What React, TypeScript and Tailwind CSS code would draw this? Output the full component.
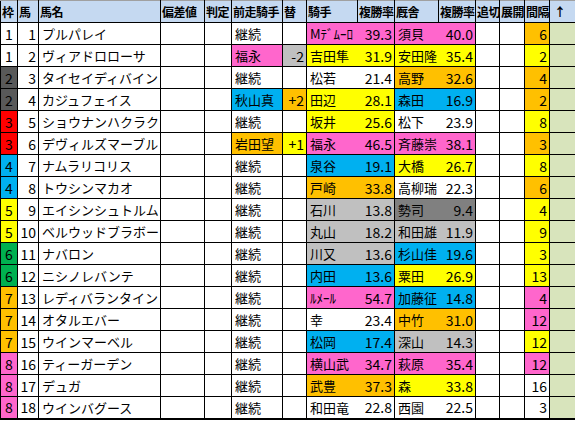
import React from "react";

const BG: Record<string, string> = {
  pink: "bg-[#ff66cc]",
  yellow: "bg-[#ffff00]",
  orange: "bg-[#ffc000]",
  blue: "bg-[#00b0f0]",
  gray: "bg-[#c0c0c0]",
  dark: "bg-[#808080]",
  white: "bg-white",
};

const FRAME: Record<number, string> = {
  1: "bg-white",
  2: "bg-[#595959]",
  3: "bg-[#ff0000]",
  4: "bg-[#00b0f0]",
  5: "bg-[#ffff00]",
  6: "bg-[#00b050]",
  7: "bg-[#ffc000]",
  8: "bg-[#ff66cc]",
};

type Row = [number, number, string, string, string, string, string, string, string, string, string, string, string, string, string];

// 枠, 馬, 馬名, 前走騎手, 色, 替, 色, 騎手, 色, 率, 厩舎, 色, 率, 間隔, 色
const rows: Row[] = [
  [1, 1, "プルパレイ", "継続", "white", "", "white", "Mﾃﾞﾑｰﾛ", "pink", "39.3", "須貝", "pink", "40.0", "6", "orange"],
  [1, 2, "ヴィアドロローサ", "福永", "pink", "-2", "gray", "吉田隼", "yellow", "31.9", "安田隆", "yellow", "35.4", "2", "yellow"],
  [2, 3, "タイセイディバイン", "継続", "white", "", "white", "松若", "white", "21.4", "高野", "orange", "32.6", "4", "orange"],
  [2, 4, "カジュフェイス", "秋山真", "blue", "+2", "orange", "田辺", "yellow", "28.1", "森田", "blue", "16.9", "2", "orange"],
  [3, 5, "ショウナンハクラク", "継続", "white", "", "white", "坂井", "yellow", "25.6", "松下", "white", "23.9", "8", "yellow"],
  [3, 6, "デヴィルズマーブル", "岩田望", "orange", "+1", "yellow", "福永", "pink", "46.5", "斉藤崇", "pink", "38.1", "3", "orange"],
  [4, 7, "ナムラリコリス", "継続", "white", "", "white", "泉谷", "blue", "19.1", "大橋", "yellow", "26.7", "8", "yellow"],
  [4, 8, "トウシンマカオ", "継続", "white", "", "white", "戸崎", "orange", "33.8", "高柳瑞", "white", "22.3", "6", "orange"],
  [5, 9, "エイシンシュトルム", "継続", "white", "", "white", "石川", "gray", "13.8", "勢司", "dark", "9.4", "4", "yellow"],
  [5, 10, "ベルウッドブラボー", "継続", "white", "", "white", "丸山", "gray", "18.2", "和田雄", "gray", "11.9", "9", "yellow"],
  [6, 11, "ナバロン", "継続", "white", "", "white", "川又", "gray", "13.6", "杉山佳", "blue", "19.6", "3", "yellow"],
  [6, 12, "ニシノレバンテ", "継続", "white", "", "white", "内田", "blue", "13.6", "粟田", "yellow", "26.9", "13", "yellow"],
  [7, 13, "レディバランタイン", "継続", "white", "", "white", "ﾙﾒｰﾙ", "pink", "54.7", "加藤征", "blue", "14.8", "4", "pink"],
  [7, 14, "オタルエバー", "継続", "white", "", "white", "幸", "white", "23.4", "中竹", "orange", "31.0", "12", "pink"],
  [7, 15, "ウインマーベル", "継続", "white", "", "white", "松岡", "blue", "17.4", "深山", "gray", "14.3", "12", "yellow"],
  [8, 16, "ティーガーデン", "継続", "white", "", "white", "横山武", "pink", "34.7", "萩原", "pink", "35.4", "12", "pink"],
  [8, 17, "デュガ", "継続", "white", "", "white", "武豊", "orange", "37.3", "森", "yellow", "33.8", "16", "white"],
  [8, 18, "ウインバグース", "継続", "white", "", "white", "和田竜", "white", "22.8", "西園", "white", "22.5", "3", "white"],
];

const widths = [17, 21, 122, 44, 27, 51, 24, 51, 37, 44, 37, 24, 25, 25, 25, 26];
const heads = ["枠", "馬", "馬名", "偏差値", "判定", "前走騎手", "替", "騎手", "複勝率", "厩舎", "複勝率", "追切", "展開", "間隔", "↑"];

const cell = "border border-black h-[22px] p-0 whitespace-nowrap overflow-hidden leading-none";

export default function App() {
  return (
    <div
      className="w-[575px] h-[423px] bg-white overflow-hidden text-black"
      style={{ fontFamily: '"Noto Sans CJK JP", "Liberation Sans", sans-serif' }}
    >
      <table className="table-fixed border-collapse w-[575px] text-[13px] border-b-2 border-b-black">
        <colgroup>
          {widths.map((w, i) => (
            <col key={i} style={{ width: w }} />
          ))}
        </colgroup>
        <thead>
          <tr className="bg-[#c5d9f1]">
            {heads.map((h, i) => (
              <th
                key={i}
                colSpan={i === 14 ? 2 : 1}
                className={`${cell} border-t-[#a0a0a0] font-bold text-left text-[12px] tracking-[-0.5px] ${i === 14 ? "pl-[4px]" : "pl-[1px]"}`}
              >
                {h}
              </th>
            ))}
          </tr>
        </thead>
        <tbody>
          {rows.map((r) => (
            <tr key={r[1]}>
              <td className={`${cell} ${FRAME[r[0]]} text-center text-[14px]`}>{r[0]}</td>
              <td className={`${cell} text-right pr-[2px] text-[14px]`}>{r[1]}</td>
              <td className={`${cell} pl-[3px]`}>{r[2]}</td>
              <td className={cell}></td>
              <td className={cell}></td>
              <td className={`${cell} ${BG[r[4]]} pl-[3px]`}>{r[3]}</td>
              <td className={`${cell} ${BG[r[6]]} text-right pr-[2px] text-[14px]`}>{r[5]}</td>
              <td className={`${cell} ${BG[r[8]]} pl-[3px] border-r-0`}>{r[7]}</td>
              <td className={`${cell} ${BG[r[8]]} text-right pr-[2px] text-[14px] border-l-0`}>{r[9]}</td>
              <td className={`${cell} ${BG[r[11]]} pl-[3px] border-r-0`}>{r[10]}</td>
              <td className={`${cell} ${BG[r[11]]} text-right pr-[2px] text-[14px] border-l-0`}>{r[12]}</td>
              <td className={`${cell} bg-white`}></td>
              <td className={`${cell} bg-white`}></td>
              <td className={`${cell} ${BG[r[14]]} text-right pr-[2px] text-[14px]`}>{r[13]}</td>
              <td colSpan={2} className={`${cell} bg-[#d8e4bc] border-r-0`}></td>
            </tr>
          ))}
        </tbody>
      </table>
    </div>
  );
}
